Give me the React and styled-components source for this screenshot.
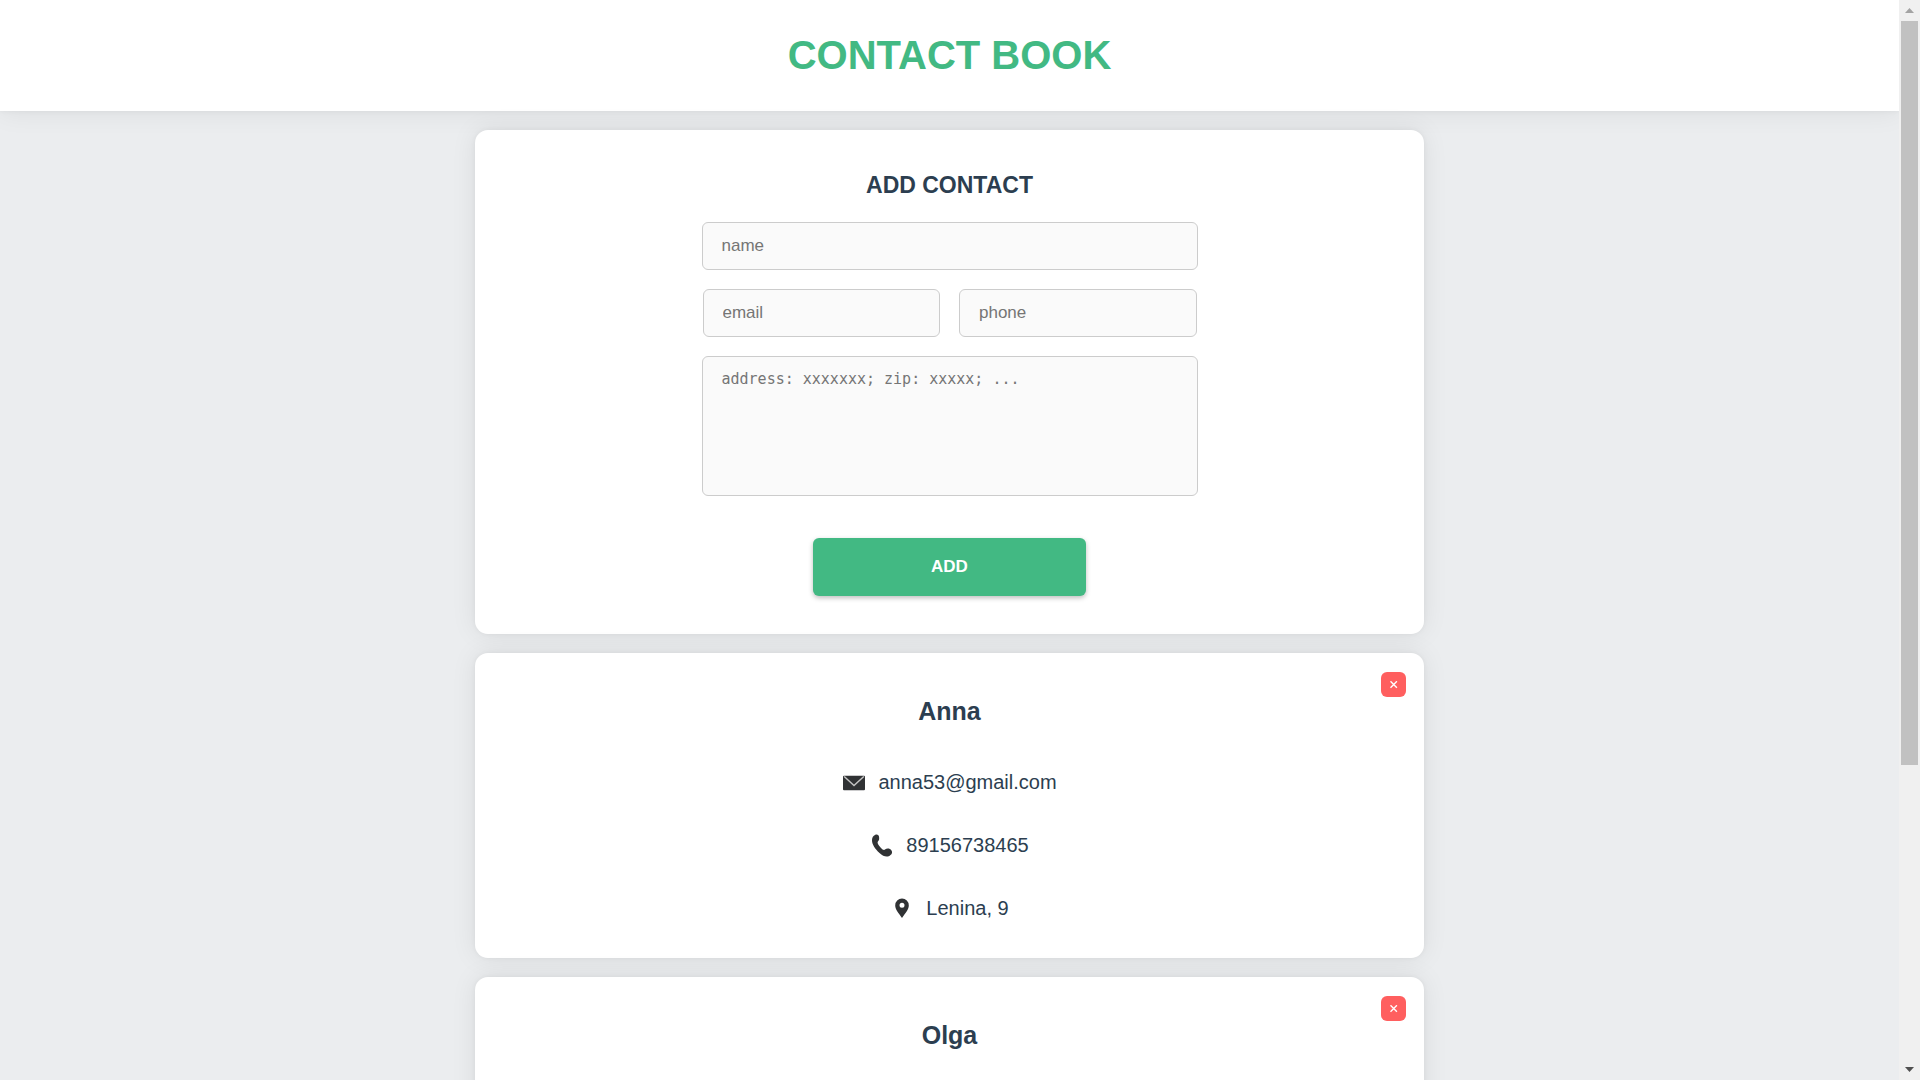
import React, { useState } from "react";
import styled, { createGlobalStyle } from "styled-components";

const GlobalStyle = createGlobalStyle`
  * {
    box-sizing: border-box;
  }

  body {
    margin: 0;
    background: #ebedef;
    color: #2c3e50;
    font-family: Arial, "Liberation Sans", Helvetica, sans-serif;
  }
`;

const softShadow = "0 0 5px rgba(0, 0, 0, 0.05), 0 0 26px rgba(0, 0, 0, 0.08)";

const Shell = styled.div`
  display: flex;
  height: 100vh;
`;

const Page = styled.div`
  flex: 1;
  overflow-y: auto;
  scrollbar-width: none;
`;

const Header = styled.header`
  padding: 32px 19px 33px;
  background: #fff;
  box-shadow: ${softShadow};
  text-align: center;
`;

const Title = styled.h1`
  margin: 0;
  color: #42b983;
  font-size: 40px;
  line-height: 46px;
`;

const Content = styled.main`
  display: flex;
  flex-direction: column;
  align-items: center;
  gap: 19px;
  padding: 19px 0;
`;

const Card = styled.section`
  position: relative;
  display: flex;
  flex-direction: column;
  align-items: center;
  width: 50%;
  min-height: 305px;
  padding: 38px;
  border-radius: 13px;
  background: #fff;
  box-shadow: ${softShadow};
`;

const FormTitle = styled.h2`
  margin: 0 0 20px;
  font-size: 23px;
  line-height: 34px;
`;

const Form = styled.form`
  display: flex;
  flex-direction: column;
  align-items: center;
  gap: 19px;
  width: 100%;
  max-width: 496px;
`;

const FieldRow = styled.div`
  display: flex;
  gap: 19px;
  width: 100%;
  padding: 0 1px;
`;

const Input = styled.input`
  width: 100%;
  min-width: 0;
  height: 48px;
  padding: 12px 19px 13px;
  border: 1px solid #ccc;
  border-radius: 6px;
  background: #fafafa;
  color: inherit;
  font: 17px/21px Arial, "Liberation Sans", sans-serif;

  &::placeholder {
    color: #757575;
  }
`;

const TextArea = styled.textarea`
  display: block;
  width: 100%;
  height: 140px;
  padding: 12px 19px;
  border: 1px solid #ccc;
  border-radius: 6px;
  background: #fafafa;
  color: inherit;
  font: 15px/20px Consolas, "DejaVu Sans Mono", monospace;
  resize: none;

  &::placeholder {
    color: #757575;
  }
`;

const AddButton = styled.button`
  width: 55%;
  margin-top: 23px;
  padding: 19px;
  border: 0;
  border-radius: 6px;
  background: #42b983;
  box-shadow: 0 2px 5px rgba(0, 0, 0, 0.26);
  color: #fff;
  font: bold 17px/20px Arial, "Liberation Sans", sans-serif;
  cursor: pointer;
`;

const RemoveButton = styled.button`
  position: absolute;
  top: 19px;
  right: 18px;
  display: grid;
  place-items: center;
  width: 25px;
  height: 25px;
  padding: 0;
  border: 0;
  border-radius: 6px;
  background: #ff5f5f;
  cursor: pointer;
`;

const Name = styled.h2`
  margin: 6px 0 45px;
  font-size: 25px;
  line-height: 29px;
`;

const Details = styled.ul`
  display: flex;
  flex-direction: column;
  align-items: center;
  gap: 40px;
  margin: 0;
  padding: 0;
  list-style: none;
`;

const Detail = styled.li`
  display: flex;
  align-items: center;
  gap: 12px;
  font-size: 20px;
  line-height: 23px;
`;

const Icon = styled.svg`
  width: 24px;
  height: 24px;
  margin: -1px 0;
  fill: #303234;
`;

const ScrollRail = styled.div`
  display: flex;
  flex-direction: column;
  align-items: center;
  width: 21px;
  background: #f0f0f0;
`;

const RailButton = styled.button`
  display: grid;
  place-items: center;
  width: 100%;
  height: 21px;
  padding: 0;
  border: 0;
  background: none;
  color: ${(p) => p.$tone};
`;

const RailTrack = styled.div`
  flex: 1;
  width: 17px;
`;

const RailThumb = styled.div`
  height: 71.7%;
  background: #c1c1c1;
`;

const MailIcon = () => (
  <Icon viewBox="0 0 24 24" aria-hidden="true">
    <rect x="1" y="4.7" width="22" height="14.6" rx="1" />
    <path d="M2.2 5.400L12 14.600l9.800-9.200" fill="none" stroke="#c4c4c4" strokeWidth="1.400" />
  </Icon>
);

const PhoneIcon = () => (
  <Icon viewBox="0 0 24 24" aria-hidden="true">
    <path d="M5 1C7 0 8.600.9 9 2.600C9.400 5 9.200 6.500 7.900 7.600C7 8.700 8 11 11 14C12.500 15.600 14 16.500 15 15.500C17 14 20 14.300 21.500 16.500C22.600 18.300 22 20 20.500 21C18 23.500 13.500 23 9.500 19C5 15 1.800 10 2 6C2.100 3.500 3.300 1.800 5 1z" />
  </Icon>
);

const PinIcon = () => (
  <Icon viewBox="0 0 24 24" aria-hidden="true">
    <path
      fillRule="evenodd"
      d="M12 1.600a6.800 6.800 0 0 0-6.800 6.800c0 4.200 3.500 7.400 6.800 12.500 3.300-5.100 6.800-8.300 6.800-12.500A6.800 6.800 0 0 0 12 1.600zm0 4.200a2.500 2.500 0 1 1 0 5 2.500 2.500 0 0 1 0-5z"
    />
  </Icon>
);

const contacts = [
  { name: "Anna", email: "anna53@gmail.com", phone: "89156738465", address: "Lenina, 9" },
  { name: "Olga" },
];

function ContactCard({ contact, onRemove }) {
  return (
    <Card>
      <RemoveButton type="button" aria-label={`Remove ${contact.name}`} onClick={onRemove}>
        <svg width="8" height="8" viewBox="0 0 8 8" stroke="#fff" strokeWidth="1.400">
          <path d="M.5.3l6.400 6.400M6.900.3L.5 6.700" />
        </svg>
      </RemoveButton>
      <Name>{contact.name}</Name>
      <Details>
        {contact.email && (
          <Detail>
            <MailIcon />
            {contact.email}
          </Detail>
        )}
        {contact.phone && (
          <Detail>
            <PhoneIcon />
            {contact.phone}
          </Detail>
        )}
        {contact.address && (
          <Detail>
            <PinIcon />
            {contact.address}
          </Detail>
        )}
      </Details>
    </Card>
  );
}

export default function App() {
  const [list, setList] = useState(contacts);

  const addContact = (event) => {
    event.preventDefault();
    const data = Object.fromEntries(new FormData(event.currentTarget));
    setList([data, ...list]);
    event.currentTarget.reset();
  };

  return (
    <>
      <GlobalStyle />
      <Shell>
        <Page>
          <Header>
            <Title>CONTACT BOOK</Title>
          </Header>
          <Content>
            <Card>
              <FormTitle>ADD CONTACT</FormTitle>
              <Form onSubmit={addContact}>
                <Input name="name" aria-label="name" placeholder="name" />
                <FieldRow>
                  <Input name="email" type="email" aria-label="email" placeholder="email" />
                  <Input name="phone" type="tel" aria-label="phone" placeholder="phone" />
                </FieldRow>
                <TextArea name="address" aria-label="address" placeholder="address: xxxxxxx; zip: xxxxx; ..." />
                <AddButton type="submit">ADD</AddButton>
              </Form>
            </Card>
            {list.map((contact) => (
              <ContactCard
                key={contact.name}
                contact={contact}
                onRemove={() => setList(list.filter((c) => c !== contact))}
              />
            ))}
          </Content>
        </Page>
        <ScrollRail>
          <RailButton type="button" aria-label="Scroll up" $tone="#a3a3a3">
            <svg width="9" height="5" viewBox="0 0 9 5" fill="currentColor">
              <path d="M0 5L4.500 0 9 5z" />
            </svg>
          </RailButton>
          <RailTrack>
            <RailThumb />
          </RailTrack>
          <RailButton type="button" aria-label="Scroll down" $tone="#505050">
            <svg width="9" height="5" viewBox="0 0 9 5" fill="currentColor">
              <path d="M0 0l4.500 5L9 0z" />
            </svg>
          </RailButton>
        </ScrollRail>
      </Shell>
    </>
  );
}
